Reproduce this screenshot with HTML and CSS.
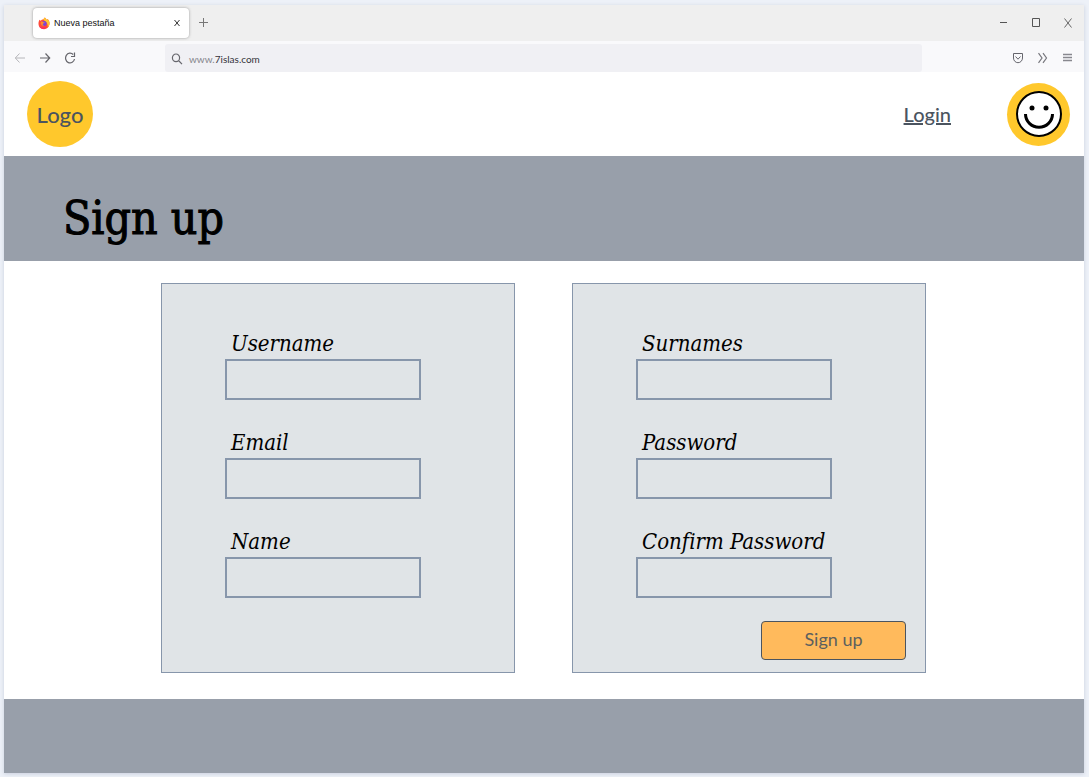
FILE: index.html
```html
<!DOCTYPE html>
<html lang="es">
<head>
<meta charset="utf-8">
<meta name="viewport" content="width=device-width, initial-scale=1">
<title>Sign up</title>
<link rel="stylesheet" href="styles.css">
</head>
<body>
<div class="window">
  <div class="tabbar">
    <div class="tab">
      <svg class="favicon" viewBox="0 0 12 12" aria-hidden="true">
        <path d="M1.4 2.2 2.7 3.3C3.4 2.2 4.2 2 5 2c.8-.5 1.5-1.2 1.7-1.9 1 .5 1.6 1.4 1.9 2.3l.9-.8c1.5 1.3 2.2 3 2 4.9C11.100 9.700 9 11.700 6 11.700S.6 9.500.5 6.500C.4 4.700.9 3.500 1.400 2.200Z" fill="#ff4b3a"/>
        <path d="M6.700.1c1 .5 1.600 1.400 1.900 2.300l.9-.8c1.500 1.300 2.200 3 2 4.900-.2 1.400-.8 2.600-1.700 3.500C10 7 9 4.500 5 2c.8-.5 1.500-1.200 1.700-1.900Z" fill="#ffc52e"/>
        <path d="M.8 8.300c1.500 1.700 5 2.300 7.800.7-1 2-2.400 2.500-4 2.500C2.800 11 1.300 9.900.8 8.300Z" fill="#fb2d62"/>
        <circle cx="6.100" cy="6" r="2.500" fill="#7b45d8"/>
        <path d="M2.700 4.500c1-.7 2-.6 2.700.2.600.1 1 .1 1.300.3-.4.900-1.600.7-1.900 1.500-.2.900.5 1.400 1.300 1.500-2 .8-3.700-.5-3.400-3.500Z" fill="#ff8a2b"/>
      </svg>
      <span class="tab-title">Nueva pestaña</span>
      <button class="icon-btn" type="button" aria-label="Cerrar pestaña">
        <svg class="icon-small" viewBox="0 0 8 8"><path d="M1.500 1 6.500 7M6.500 1 1.500 7" stroke="#333"/></svg>
      </button>
    </div>
    <button class="icon-btn" type="button" aria-label="Abrir pestaña">
      <svg class="icon" viewBox="0 0 12 12"><path d="M5.500 1v9M1 5.500h9" stroke="#777"/></svg>
    </button>
    <div class="window-controls">
      <button class="icon-btn" type="button" aria-label="Minimizar"><svg class="icon" viewBox="0 0 12 12"><path d="M2 5.500h7" stroke="#555"/></svg></button>
      <button class="icon-btn" type="button" aria-label="Maximizar"><svg class="icon" viewBox="0 0 12 12"><path d="M2.500 1.500h7v8h-7Z" stroke="#555"/></svg></button>
      <button class="icon-btn" type="button" aria-label="Cerrar"><svg class="icon" viewBox="0 0 12 12"><path d="m2.500 1.500 7 9M9.500 1.500l-7 9" stroke="#666"/></svg></button>
    </div>
  </div>
  <div class="toolbar">
    <div class="nav-buttons">
      <button class="icon-btn" type="button" aria-label="Atrás"><svg class="icon" viewBox="0 0 12 12"><path d="M11 6H1.500M5.500 1.500 1.300 6l4.200 4.500" stroke="#b6b6ba"/></svg></button>
      <button class="icon-btn" type="button" aria-label="Adelante"><svg class="icon" viewBox="0 0 12 12"><path d="M1 6h9.500M6.500 1.500 10.700 6l-4.200 4.500" stroke="#66666c" stroke-width="1.200"/></svg></button>
      <button class="icon-btn" type="button" aria-label="Recargar"><svg class="icon" viewBox="0 0 12 12"><path d="M9.200 2.500A4.500 4.900 0 1 0 10.500 7M10.500.5v4H7" stroke="#66666c" stroke-width="1.200"/></svg></button>
    </div>
    <div class="address">
      <svg class="icon" viewBox="0 0 12 12" aria-hidden="true"><path d="M7.500 7.500 11 11.200M5 1a3.600 3.800 0 1 1 0 7.600A3.600 3.800 0 0 1 5 1Z" stroke="#66666c" stroke-width="1.200"/></svg>
      <span class="url"><span class="url-prefix">www.</span>7islas.com</span>
    </div>
    <div class="tools">
      <button class="icon-btn" type="button" aria-label="Guardar en Pocket"><svg class="icon" viewBox="0 0 12 12"><path d="M1.500 1.500h9v4.500a4.500 4.700 0 0 1-9 0ZM3.500 4.500 6 7.200l2.500-2.700" stroke="#66666d"/></svg></button>
      <button class="icon-btn" type="button" aria-label="Más herramientas"><svg class="icon" viewBox="0 0 12 12"><path d="M1.500 1.200 5 6 1.500 10.800M6 1.200 9.500 6 6 10.800" stroke="#77777d" stroke-width="1.200"/></svg></button>
      <button class="icon-btn" type="button" aria-label="Menú"><svg class="icon" viewBox="0 0 12 12"><path d="M1 2.500h9M1 5.500h9M1 8.500h9" stroke="#88888e" stroke-width="1.500"/></svg></button>
    </div>
  </div>

  <header class="site-header">
    <a class="logo" href="#">Logo</a>
    <nav class="account">
      <a class="login" href="#">Login</a>
      <a class="avatar" href="#" aria-label="Perfil">
        <svg class="face" viewBox="0 0 48 48" fill="none">
          <circle cx="24" cy="24" r="22" fill="#fff" stroke="#000" stroke-width="2"/>
          <circle cx="17" cy="18" r="2.500" fill="#000"/><circle cx="31" cy="18" r="2.500" fill="#000"/>
          <path d="M10.500 24a13.500 13.200 0 0 0 27 0" stroke="#000" stroke-width="3"/>
        </svg>
      </a>
    </nav>
  </header>

  <div class="banner"><h1 class="title">Sign up</h1></div>

  <main class="content">
    <form class="form">
      <div class="card">
        <div class="field"><label class="label" for="username">Username</label><input class="input" id="username" type="text"></div>
        <div class="field"><label class="label" for="email">Email</label><input class="input" id="email" type="email"></div>
        <div class="field"><label class="label" for="name">Name</label><input class="input" id="name" type="text"></div>
      </div>
      <div class="card">
        <div class="field"><label class="label" for="surnames">Surnames</label><input class="input" id="surnames" type="text"></div>
        <div class="field"><label class="label" for="password">Password</label><input class="input" id="password" type="password"></div>
        <div class="field"><label class="label" for="confirm">Confirm Password</label><input class="input" id="confirm" type="password"></div>
        <button class="submit" type="submit">Sign up</button>
      </div>
    </form>
  </main>

  <footer class="footer"></footer>
</div>
</body>
</html>
```
FILE: styles.css
```css
* { box-sizing: border-box; }

body {
  margin: 0;
  padding: 5px 5px 4px 4px;
  min-height: 100vh;
  display: flex;
  background: #edf1f8;
  font-family: Lato, sans-serif;
  color: #4b545f;
}

.window {
  flex: 1;
  display: flex;
  flex-direction: column;
  background: #fff;
  box-shadow: 0 1px 4px #c9cfdd;
}

.icon-btn {
  display: flex;
  padding: 0;
  border: 0;
  background: none;
}

.icon { width: 12px; height: 12px; fill: none; }
.icon-small { width: 8px; height: 8px; fill: none; }

.tabbar {
  display: flex;
  align-items: center;
  height: 36px;
  padding: 0 10px 0 29px;
  gap: 9px;
  background: #efefef;
}

.tab {
  display: flex;
  align-items: center;
  width: 156px;
  height: 30px;
  padding: 0 8px 0 5px;
  gap: 4px;
  border-radius: 4px;
  background: #fff;
  box-shadow: 0 0 3px #999;
}

.favicon { width: 12px; height: 13px; }

.tab-title {
  flex: 1;
  font: 9px/12px "Liberation Sans", sans-serif;
  color: #111;
}

.window-controls {
  display: flex;
  gap: 20px;
  margin-left: auto;
}

.toolbar {
  display: flex;
  align-items: center;
  height: 31px;
  padding: 3px 10px 0;
  background: #f9f9fb;
}

.nav-buttons {
  display: flex;
  gap: 13px;
  width: 151px;
}

.address {
  flex: 1;
  display: flex;
  align-items: center;
  height: 28px;
  padding: 2px 6px 0;
  gap: 6px;
  border-radius: 3px;
  background: #f0f0f4;
}

.url {
  font: 10px/12px Lato, sans-serif;
  color: #33333a;
}

.url-prefix { color: #85858b; }

.tools {
  display: flex;
  justify-content: flex-end;
  gap: 13px;
  width: 152px;
}

.site-header {
  display: flex;
  align-items: center;
  justify-content: space-between;
  height: 84px;
  padding: 0 14px 0 23px;
}

.logo {
  display: grid;
  place-items: center;
  width: 66px;
  height: 66px;
  border-radius: 50%;
  background: #ffc82c;
  color: #4b545f;
  font-size: 22px;
  font-weight: 500;
  text-decoration: none;
}

.account {
  display: flex;
  align-items: center;
  gap: 56px;
}

.login { color: #4b545f; font-size: 20px; font-weight: 500; }

.avatar {
  display: grid;
  place-items: center;
  width: 63px;
  height: 63px;
  border-radius: 50%;
  background: #ffc82c;
}

.face { width: 48px; height: 48px; }

.banner {
  height: 105px;
  padding: 32px 59px 0;
  background: #989faa;
}

.title {
  margin: 0;
  font: 46px/60px "DejaVu Serif Condensed", "DejaVu Serif", serif;
  -webkit-text-stroke: 1px #000;
  color: #000;
}

.content {
  flex: 1;
  padding: 22px 25px 26px 24px;
}

.form {
  display: flex;
  justify-content: center;
  gap: 57px;
}

.card {
  display: flex;
  flex-direction: column;
  width: 354px;
  min-height: 390px;
  padding: 45px 19px 12px 63px;
  gap: 28px;
  border: 1px solid #8796ab;
  background: #e0e4e7;
}

.field {
  display: flex;
  flex-direction: column;
  align-items: flex-start;
}

.label {
  padding-left: 6px;
  font: italic 22px/30px "DejaVu Serif Condensed", "DejaVu Serif", serif;
  color: #000;
}

.input {
  width: 196px;
  height: 41px;
  padding: 0 8px;
  border: 2px solid #8796ab;
  border-radius: 0;
  background: transparent;
  font: 16px Lato, sans-serif;
}

.submit {
  align-self: flex-end;
  width: 145px;
  height: 39px;
  margin-top: -5px;
  padding: 0 0 4px;
  border: 1px solid #4b545f;
  border-radius: 4px;
  background: #ffba5c;
  color: #5c605f;
  font: 18px Lato, sans-serif;
}

.footer {
  height: 74px;
  background: #989faa;
}
```
